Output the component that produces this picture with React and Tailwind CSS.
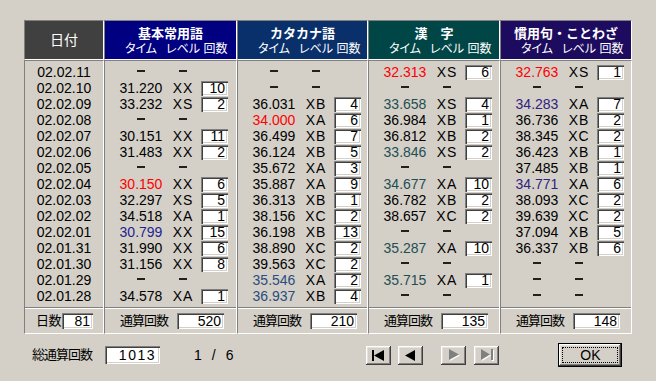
import React from "react";

const dates = [
  "02.02.11", "02.02.10", "02.02.09", "02.02.08", "02.02.07", "02.02.06", "02.02.05",
  "02.02.04", "02.02.03", "02.02.02", "02.02.01", "02.01.31", "02.01.30", "02.01.29", "02.01.28",
];

const cols = [
  {
    title: "基本常用語",
    bg: "bg-[#000080]",
    hi: "text-[#23238f]",
    width: "w-[133px]",
    total: 520,
    rows: [
      null,
      ["31.220", "XX", 10],
      ["33.232", "XS", 2],
      null,
      ["30.151", "XX", 11],
      ["31.483", "XX", 2],
      null,
      ["30.150", "XX", 6, "r"],
      ["32.297", "XS", 5],
      ["34.518", "XA", 1],
      ["30.799", "XX", 15, "h"],
      ["31.990", "XX", 6],
      ["31.156", "XX", 8],
      null,
      ["34.578", "XA", 1],
    ],
  },
  {
    title: "カタカナ語",
    bg: "bg-[#09306a]",
    hi: "text-[#2a4c80]",
    width: "w-[131px]",
    total: 210,
    rows: [
      null,
      null,
      ["36.031", "XB", 4],
      ["34.000", "XA", 6, "r"],
      ["36.499", "XB", 7],
      ["36.124", "XB", 5],
      ["35.672", "XA", 3],
      ["35.887", "XA", 9],
      ["36.313", "XB", 1],
      ["38.156", "XC", 2],
      ["36.198", "XB", 13],
      ["38.890", "XC", 2],
      ["39.563", "XC", 2],
      ["35.546", "XA", 2, "h"],
      ["36.937", "XB", 4, "h"],
    ],
  },
  {
    title: "漢　字",
    bg: "bg-[#004646]",
    hi: "text-[#1f4e52]",
    width: "w-[132px]",
    total: 135,
    rows: [
      ["32.313", "XS", 6, "r"],
      null,
      ["33.658", "XS", 4, "h"],
      ["36.984", "XB", 1],
      ["36.812", "XB", 2],
      ["33.846", "XS", 2, "h"],
      null,
      ["34.677", "XA", 10, "h"],
      ["36.782", "XB", 2],
      ["38.657", "XC", 2],
      null,
      ["35.287", "XA", 10, "h"],
      null,
      ["35.715", "XA", 1, "h"],
      null,
    ],
  },
  {
    title: "慣用句・ことわざ",
    bg: "bg-[#1c0b5e]",
    hi: "text-[#302282]",
    width: "w-[132px]",
    total: 148,
    rows: [
      ["32.763", "XS", 1, "r"],
      null,
      ["34.283", "XA", 7, "h"],
      ["36.736", "XB", 2],
      ["38.345", "XC", 2],
      ["36.423", "XB", 1],
      ["37.485", "XB", 1],
      ["34.771", "XA", 6, "h"],
      ["38.093", "XC", 2],
      ["39.639", "XC", 2],
      ["37.094", "XB", 5],
      ["36.337", "XB", 6],
      null,
      null,
      null,
    ],
  },
];

const sunken =
  "border border-t-[#808080] border-l-[#808080] border-r-white border-b-white";
const fieldShadow =
  "shadow-[inset_1px_1px_0_#808080,inset_2px_2px_0_#404040,inset_-1px_-1px_0_#ffffff,inset_-2px_-2px_0_#d4d0c8]";
const raised =
  "shadow-[inset_-1px_-1px_0_#404040,inset_1px_1px_0_#ffffff,inset_-2px_-2px_0_#808080,inset_2px_2px_0_#e4e2de]";

function Dash() {
  return <span className="block w-[8px] h-[2px] bg-[#202020] translate-y-[-1px]"></span>;
}

function Field({ value, className }) {
  return (
    <div className={`bg-white ${fieldShadow} text-right pr-[3px] text-black ${className}`}>
      {value}
    </div>
  );
}

function DateColumn() {
  return (
    <div className="w-[80px] flex flex-col">
      <div className={`${sunken} h-[40px] bg-[#404040] flex items-center justify-center text-white text-[14px]`}>
        日付
      </div>
      <div className={`${sunken} h-[274px] flex flex-col`}>
        <div className="pt-[3px] pb-[3px] border-b border-[#808080]">
          {dates.map((d) => (
            <div key={d} className="h-[16px] leading-[16px] text-center text-[14px] text-black">
              {d}
            </div>
          ))}
        </div>
        <div className="flex-1 border-t border-white flex items-center pl-[11px]">
          <span className="text-[13px] text-black tracking-[-0.5px] leading-[16px]">日数</span>
          <Field value="81" className="ml-[1px] w-[31px] h-[16px] leading-[16px] text-[14px]" />
        </div>
      </div>
    </div>
  );
}

function DataColumn({ col }) {
  return (
    <div className={`${col.width} flex flex-col`}>
      <div className={`${sunken} h-[40px] ${col.bg} flex flex-col text-white`}>
        <div className="h-[21px] pt-[4px] leading-[17px] text-center text-[13px] font-bold">
          {col.title}
        </div>
        <div className="flex h-[14px] items-center text-[12px] leading-[14px] [font-feature-settings:'palt']">
          <div className="ml-[13px] w-[46px] flex justify-center whitespace-nowrap">タイム</div>
          <div className="ml-[10px] w-[18px] flex justify-center whitespace-nowrap">レベル</div>
          <div className="ml-[10px] w-[27px] flex justify-center whitespace-nowrap">回数</div>
        </div>
      </div>
      <div className={`${sunken} h-[274px] flex flex-col`}>
        <div className="pt-[3px] pb-[3px] border-b border-[#808080]">
          {col.rows.map((r, i) => {
            const color = r && r[3] === "r" ? "text-[#ff0000]" : r && r[3] === "h" ? col.hi : "text-black";
            return (
              <div key={i} className="flex h-[16px] items-center text-[14px] leading-[16px]">
                <div className={`ml-[13px] w-[46px] h-[16px] flex items-center justify-center ${color}`}>
                  {r ? r[0] : <Dash />}
                </div>
                <div className="ml-[10px] w-[18px] h-[16px] flex items-center justify-center text-black tracking-[1px]">
                  {r ? r[1] : <Dash />}
                </div>
                {r && <Field value={r[2]} className="ml-[9px] w-[27px] h-[15px] leading-[15px]" />}
              </div>
            );
          })}
        </div>
        <div className="flex-1 border-t border-white flex items-center pl-[15px]">
          <span className="text-[13px] text-black tracking-[-1px] w-[48px] leading-[16px]">通算回数</span>
          <Field value={col.total} className="ml-[9px] w-[47px] h-[16px] leading-[16px] text-[14px]" />
        </div>
      </div>
    </div>
  );
}

function NavButton({ children }) {
  return (
    <div className={`w-[25px] h-[19px] bg-[#d4d0c8] ${raised} flex items-center justify-center`}>
      {children}
    </div>
  );
}

export default function App() {
  return (
    <div className="w-[656px] h-[381px] bg-[#d4d0c8] pt-[20px] pl-[24px] font-['Liberation_Sans','Noto_Sans_CJK_JP',sans-serif] overflow-hidden">
      <div className="flex">
        <DateColumn />
        {cols.map((c) => (
          <DataColumn key={c.title} col={c} />
        ))}
      </div>
      <div className="flex items-center h-[30px] mt-[6px]">
        <span className="ml-[8px] w-[60px] text-[13px] tracking-[-1px] text-black whitespace-nowrap leading-[16px]">総通算回数</span>
        <Field value="1013" className="ml-[13px] w-[55px] h-[18px] leading-[18px] text-[14px] tracking-[1.5px] pr-[4px]" />
        <div className="ml-[34px] flex gap-[10px] text-[14px] text-black">
          <span>1</span>
          <span>/</span>
          <span>6</span>
        </div>
        <div className="ml-[133px] flex">
          <NavButton>
            <svg width="13" height="11" viewBox="0 0 13 11">
              <rect x="0" y="0" width="2" height="11" fill="#000" />
              <polygon points="2,5.5 12,0 12,11" fill="#000" />
            </svg>
          </NavButton>
          <div className="ml-[7px]">
            <NavButton>
              <svg width="11" height="11" viewBox="0 0 11 11">
                <polygon points="0,5.5 10,0 10,11" fill="#000" />
              </svg>
            </NavButton>
          </div>
          <div className="ml-[18px]">
            <NavButton>
              <svg width="12" height="12" viewBox="0 0 12 12">
                <polygon points="2,1 2,12 12,6.5" fill="#ffffff" />
                <polygon points="1,0 1,11 11,5.5" fill="#808080" />
              </svg>
            </NavButton>
          </div>
          <div className="ml-[8px]">
            <NavButton>
              <svg width="14" height="12" viewBox="0 0 14 12">
                <polygon points="2,1 2,12 11,6.5" fill="#ffffff" />
                <rect x="12" y="1" width="2" height="11" fill="#ffffff" />
                <polygon points="1,0 1,11 10,5.5" fill="#808080" />
                <rect x="11" y="0" width="2" height="11" fill="#808080" />
              </svg>
            </NavButton>
          </div>
        </div>
        <div className="ml-[59px] w-[64px] h-[24px] border border-black flex">
          <div className={`flex-1 flex ${raised}`}>
            <div className="flex-1 m-[3px] border border-dotted border-black flex items-center justify-center text-[14px] text-black leading-none">
              OK
            </div>
          </div>
        </div>
      </div>
    </div>
  );
}
